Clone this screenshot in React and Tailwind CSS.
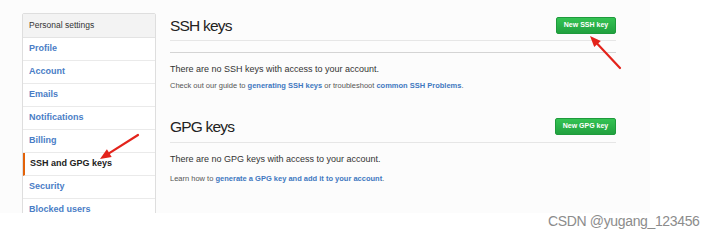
import React from "react";

const items = [
  { label: "Profile" },
  { label: "Account" },
  { label: "Emails" },
  { label: "Notifications" },
  { label: "Billing" },
  { label: "SSH and GPG keys", active: true },
  { label: "Security" },
  { label: "Blocked users" },
];

function Arrow({ x1, y1, x2, y2 }) {
  const ang = Math.atan2(y2 - y1, x2 - x1);
  const len = 11;
  const w = 4.5;
  const bx = x2 - len * Math.cos(ang);
  const by = y2 - len * Math.sin(ang);
  const px = -Math.sin(ang) * w;
  const py = Math.cos(ang) * w;
  return (
    <g>
      <line x1={x1} y1={y1} x2={bx} y2={by} stroke="#e3231b" strokeWidth="2.2" strokeLinecap="round" />
      <polygon points={`${x2},${y2} ${bx + px},${by + py} ${bx - px},${by - py}`} fill="#e3231b" />
    </g>
  );
}

export default function App() {
  return (
    <div className="relative w-[712px] h-[241px] bg-white overflow-hidden" style={{ fontFamily: '"Liberation Sans", Arial, sans-serif' }}>
      <div className="w-[650px] h-[213px] bg-[#fcfcfc] overflow-hidden flex items-start pl-[22px] pt-[13px]">
        {/* Sidebar */}
        <div className="w-[134px] shrink-0 border border-[#dedede] bg-white rounded-[2px]">
          <div className="h-[24px] flex items-center px-[6px] bg-[#f3f3f3] border-b border-[#e3e3e3] text-[8.5px] text-[#333]">
            Personal settings
          </div>
          {items.map((it) => (
            <div
              key={it.label}
              className={
                it.active
                  ? "h-[23px] flex items-center px-[5px] border-l-2 border-l-[#e36209] border-b border-b-[#eaeaea] text-[9px] font-bold text-[#222]"
                  : "h-[23px] flex items-center px-[6px] border-b border-[#eaeaea] text-[9px] font-semibold text-[#4a7dc6]"
              }
            >
              {it.label}
            </div>
          ))}
        </div>

        {/* Main */}
        <div className="ml-[14px] w-[446px] flex flex-col">
          <div className="h-[24px] flex items-center justify-between">
            <div className="text-[15.5px] text-[#222] tracking-[-0.8px] pt-[1px]">SSH keys</div>
            <div className="h-[17px] w-[60px] flex items-center justify-center rounded-[2px] bg-gradient-to-b from-[#34c353] to-[#21a13f] border border-[#1f9a3c] text-white text-[7px] font-bold">
              New SSH key
            </div>
          </div>
          <div className="mt-[3px] h-px bg-[#e6e6e6]" />
          <div className="mt-[11px] h-px bg-[#d4d4d4]" />
          <div className="mt-[10px] text-[9px] text-[#333] leading-[12px]">
            There are no SSH keys with access to your account.
          </div>
          <div className="mt-[6px] text-[7.5px] text-[#555] leading-[10px]">
            Check out our guide to <span className="text-[#4078c0] font-semibold">generating SSH keys</span> or troubleshoot{" "}
            <span className="text-[#4078c0] font-semibold">common SSH Problems</span>.
          </div>

          <div className="mt-[23px] h-[24px] flex items-center justify-between">
            <div className="text-[15.5px] text-[#222] tracking-[-0.8px] pt-[1px]">GPG keys</div>
            <div className="h-[17px] w-[61px] flex items-center justify-center rounded-[2px] bg-gradient-to-b from-[#34c353] to-[#21a13f] border border-[#1f9a3c] text-white text-[7px] font-bold">
              New GPG key
            </div>
          </div>
          <div className="mt-[4px] h-px bg-[#e6e6e6]" />
          <div className="mt-[10px] text-[9px] text-[#333] leading-[12px]">
            There are no GPG keys with access to your account.
          </div>
          <div className="mt-[9px] text-[7.5px] text-[#555] leading-[10px]">
            Learn how to <span className="text-[#4078c0] font-semibold">generate a GPG key and add it to your account</span>.
          </div>
        </div>
      </div>

      {/* Watermark */}
      <div className="absolute left-[548px] top-[211px] text-[14px] tracking-[-0.35px] text-[#8c8c8c] whitespace-nowrap">
        CSDN @yugang_123456
      </div>

      {/* Arrows */}
      <svg className="absolute left-0 top-0 pointer-events-none" width="712" height="241">
        <Arrow x1={620} y1={68} x2={590} y2={36} />
        <Arrow x1={138} y1={135} x2={100} y2={159} />
      </svg>
    </div>
  );
}
